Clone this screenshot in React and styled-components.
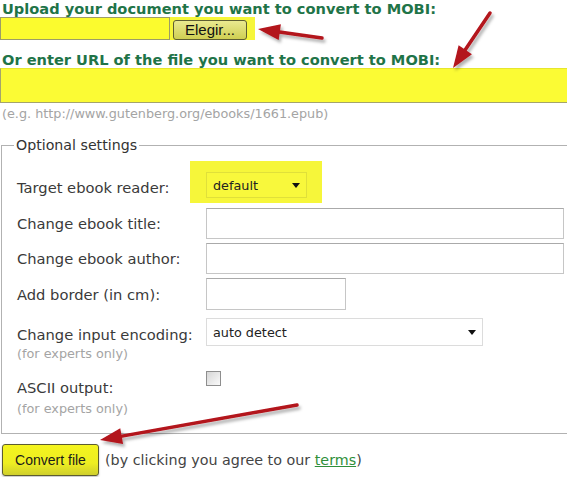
import React from 'react';
import styled, { createGlobalStyle } from 'styled-components';

const Global = createGlobalStyle`
  html, body { margin: 0; padding: 0; background: #fff; }
  body { font-family: "DejaVu Sans", Verdana, sans-serif; color: #3a3a3a; overflow: hidden; }
`;

const Page = styled.div`
  position: relative;
  width: 567px;
  height: 477px;
  overflow: hidden;
  padding-left: 2px;
  box-sizing: border-box;
`;

const Heading = styled.div`
  font-size: 14.6px;
  font-weight: bold;
  color: #1f7448;
  line-height: 17px;
  margin-top: ${p => p.$top || 0}px;
  white-space: nowrap;
`;

const UploadRow = styled.div`
  display: flex;
  align-items: flex-end;
  gap: 3px;
  margin-left: -2px;
  width: 255px;
  height: 23px;
  background: #f6f63a;
`;

const FileBox = styled.div`
  width: 168px;
  height: 21px;
  background: #fbfb2e;
  border: 1px solid #9c9c66;
`;

const PickButton = styled.button`
  font-family: "Liberation Sans", Arial, sans-serif;
  font-size: 15px;
  line-height: 18px;
  color: #111;
  width: 74px;
  height: 20px;
  padding: 0;
  border: 1px solid #5e5e32;
  border-radius: 3px;
  background: linear-gradient(#eaea90, #cfcf52);
`;

const UrlInput = styled.div`
  margin-left: -2px;
  width: 575px;
  height: 33px;
  background: #fbfb34;
  border-top: 1px solid #e6e62e;
  border-bottom: 1px solid #a4a46c;
  border-left: 1px solid #a4a46c;
`;

const Hint = styled.div`
  font-size: 12.8px;
  color: #a4a4a4;
  line-height: 15px;
  margin-top: ${p => p.$top || 0}px;
`;

const Settings = styled.fieldset`
  margin: 16px 0 0 -1px;
  padding: 7px 0 17px 15px;
  width: 580px;
  box-sizing: border-box;
  border: 1px solid #b2b2b2;
  border-right: none;
`;

const Legend = styled.legend`
  font-size: 14.2px;
  line-height: 17px;
  color: #333;
  padding: 0 2px;
  margin-left: -3px;
`;

const Row = styled.div`
  display: flex;
  align-items: ${p => p.$align || 'center'};
  margin-top: ${p => p.$top || 0}px;
`;

const LabelCol = styled.div`
  width: 189px;
  flex: none;
  padding-top: ${p => p.$pad || 0}px;
`;

const Label = styled.div`
  font-size: 14.7px;
  line-height: 17px;
  color: #3a3a3a;
  white-space: nowrap;
`;

const Note = styled.div`
  font-size: 12.8px;
  color: #a4a4a4;
  line-height: 15px;
  margin-top: ${p => p.$top || 3}px;
`;

const Highlight = styled.div`
  margin-left: -16px;
  padding: 11px 15px 5px 16px;
  background: #f6f63a;
`;

const Select = styled.div`
  display: flex;
  align-items: center;
  justify-content: space-between;
  box-sizing: border-box;
  width: ${p => p.$w}px;
  height: ${p => p.$h}px;
  padding: 0 6px 0 6px;
  font-size: 12.8px;
  color: #222;
  border: 1px solid ${p => (p.$hl ? '#e0e03a' : '#dcdcdc')};
  background: ${p => (p.$hl ? '#f8f83c' : '#fff')};
`;

const Caret = styled.span`
  width: 0;
  height: 0;
  border-left: 4px solid transparent;
  border-right: 4px solid transparent;
  border-top: 5px solid #111;
`;

const TextField = styled.div`
  box-sizing: border-box;
  width: ${p => p.$w}px;
  height: ${p => p.$h || 31}px;
  border: 1px solid #c6c6c6;
  border-top-color: #aaaaaa;
  background: #fff;
`;

const Check = styled.div`
  width: 15px;
  height: 15px;
  border: 1px solid #8e8e8e;
  background: linear-gradient(135deg, #d6d6d6, #fafafa);
  box-sizing: border-box;
  margin-top: 1px;
`;

const Footer = styled.div`
  display: flex;
  align-items: center;
  gap: 6px;
  margin-top: 10px;
`;

const ConvertButton = styled.button`
  font-family: "Liberation Sans", Arial, sans-serif;
  font-size: 14px;
  color: #1a1a1a;
  width: 97px;
  height: 32px;
  padding: 0;
  border: 1px solid #5c5c30;
  border-radius: 3px;
  background: linear-gradient(#f4f41e 0%, #eeee22 60%, #cfcf2c 100%);
  box-shadow: 0 1px 2px rgba(0, 0, 0, 0.25);
`;

const Agree = styled.span`
  font-size: 14.3px;
  color: #444;
  a { color: #2f8f3a; text-decoration: underline; }
`;

const Overlay = styled.svg`
  position: absolute;
  left: 0;
  top: 0;
  pointer-events: none;
`;

const arrows = [
  { x1: 322, y1: 38, x2: 258, y2: 29 },
  { x1: 490, y1: 13, x2: 453, y2: 68 },
  { x1: 297, y1: 405, x2: 100, y2: 440 },
];

function Arrow({ x1, y1, x2, y2 }) {
  const a = Math.atan2(y2 - y1, x2 - x1);
  const len = 22;
  const half = 8;
  const bx = x2 - Math.cos(a) * len;
  const by = y2 - Math.sin(a) * len;
  const px = -Math.sin(a) * half;
  const py = Math.cos(a) * half;
  return (
    <g filter="url(#shade)">
      <line
        x1={x1}
        y1={y1}
        x2={bx + Math.cos(a) * 4}
        y2={by + Math.sin(a) * 4}
        stroke="#b3131b"
        strokeWidth="3.5"
        strokeLinecap="round"
      />
      <polygon points={`${x2},${y2} ${bx + px},${by + py} ${bx - px},${by - py}`} fill="#b3131b" />
    </g>
  );
}

export default function App() {
  return (
    <>
      <Global />
      <Page>
        <Heading>Upload your document you want to convert to MOBI:</Heading>
        <UploadRow>
          <FileBox />
          <PickButton>Elegir...</PickButton>
        </UploadRow>
        <Heading $top={11}>Or enter URL of the file you want to convert to MOBI:</Heading>
        <UrlInput />
        <Hint $top={3}>(e.g. http://www.gutenberg.org/ebooks/1661.epub)</Hint>

        <Settings>
          <Legend>Optional settings</Legend>
          <Row $align="flex-start">
            <LabelCol $pad={18}><Label>Target ebook reader:</Label></LabelCol>
            <Highlight>
              <Select $w={101} $h={26} $hl>default<Caret /></Select>
            </Highlight>
          </Row>
          <Row $top={5}>
            <LabelCol><Label>Change ebook title:</Label></LabelCol>
            <TextField $w={358} />
          </Row>
          <Row $top={4}>
            <LabelCol><Label>Change ebook author:</Label></LabelCol>
            <TextField $w={358} />
          </Row>
          <Row $top={4}>
            <LabelCol><Label>Add border (in cm):</Label></LabelCol>
            <TextField $w={140} $h={32} />
          </Row>
          <Row $top={8} $align="flex-start">
            <LabelCol $pad={8}>
              <Label>Change input encoding:</Label>
              <Note $top={3}>(for experts only)</Note>
            </LabelCol>
            <Select $w={277} $h={28}>auto detect<Caret /></Select>
          </Row>
          <Row $top={9} $align="flex-start">
            <LabelCol $pad={9}>
              <Label>ASCII output:</Label>
              <Note $top={5}>(for experts only)</Note>
            </LabelCol>
            <Check />
          </Row>
        </Settings>

        <Footer>
          <ConvertButton>Convert file</ConvertButton>
          <Agree>(by clicking you agree to our <a href="#terms">terms</a>)</Agree>
        </Footer>

        <Overlay width="567" height="477" viewBox="0 0 567 477">
          <defs>
            <filter id="shade" x="-20%" y="-20%" width="140%" height="160%">
              <feDropShadow dx="2" dy="3" stdDeviation="1.6" floodColor="#000" floodOpacity="0.3" />
            </filter>
          </defs>
          {arrows.map((ar, i) => (
            <Arrow key={i} {...ar} />
          ))}
        </Overlay>
      </Page>
    </>
  );
}
